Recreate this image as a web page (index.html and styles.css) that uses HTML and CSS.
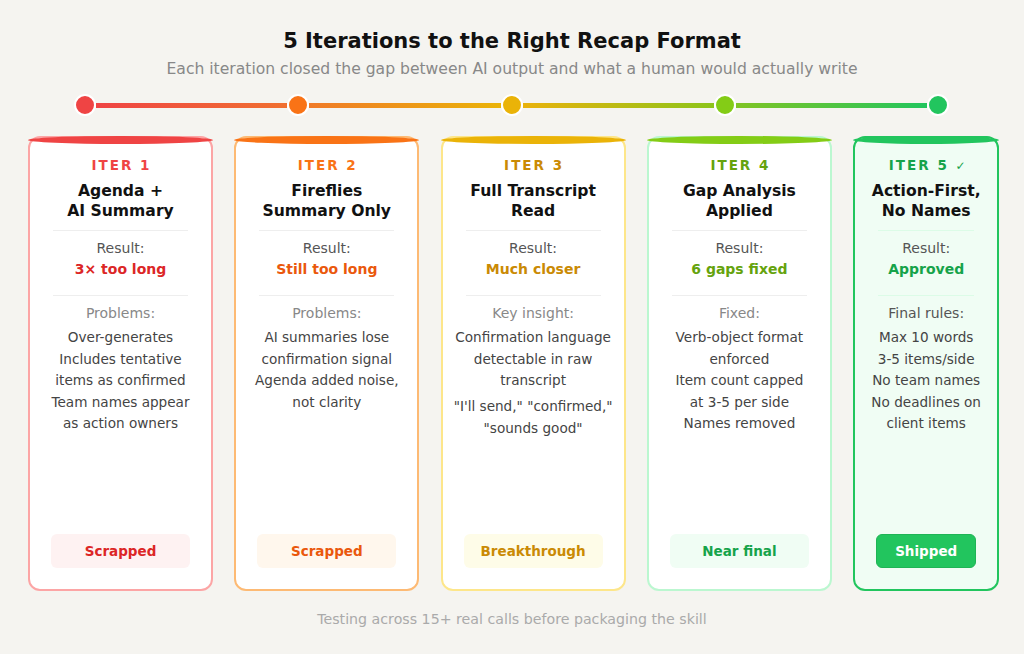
FILE: index.html
```html
<!DOCTYPE html>
<html lang="en">
<head>
<meta charset="utf-8">
<title>5 Iterations to the Right Recap Format</title>
<link rel="stylesheet" href="styles.css">
</head>
<body>
<main class="page">
  <h1 class="title">5 Iterations to the Right Recap Format</h1>
  <p class="subtitle">Each iteration closed the gap between AI output and what a human would actually write</p>

  <div class="timeline">
    <span class="dot d1"></span><span class="seg s1"></span>
    <span class="dot d2"></span><span class="seg s2"></span>
    <span class="dot d3"></span><span class="seg s3"></span>
    <span class="dot d4"></span><span class="seg s4"></span>
    <span class="dot d5"></span>
  </div>

  <div class="cards">
    <section class="card c1">
      <div class="bar"></div>
      <div class="iter">ITER 1</div>
      <div class="name">Agenda +<br>AI Summary</div>
      <div class="rule"></div>
      <div class="label">Result:</div>
      <div class="value">3× too long</div>
      <div class="rule rule2"></div>
      <div class="label light">Problems:</div>
      <div class="lines">
        <div>Over-generates</div>
        <div>Includes tentative</div>
        <div>items as confirmed</div>
        <div>Team names appear</div>
        <div>as action owners</div>
      </div>
      <div class="badge">Scrapped</div>
    </section>

    <section class="card c2">
      <div class="bar"></div>
      <div class="iter">ITER 2</div>
      <div class="name">Fireflies<br>Summary Only</div>
      <div class="rule"></div>
      <div class="label">Result:</div>
      <div class="value">Still too long</div>
      <div class="rule rule2"></div>
      <div class="label light">Problems:</div>
      <div class="lines">
        <div>AI summaries lose</div>
        <div>confirmation signal</div>
        <div>Agenda added noise,</div>
        <div>not clarity</div>
      </div>
      <div class="badge">Scrapped</div>
    </section>

    <section class="card c3">
      <div class="bar"></div>
      <div class="iter">ITER 3</div>
      <div class="name">Full Transcript<br>Read</div>
      <div class="rule"></div>
      <div class="label">Result:</div>
      <div class="value">Much closer</div>
      <div class="rule rule2"></div>
      <div class="label light">Key insight:</div>
      <div class="lines">
        <div>Confirmation language</div>
        <div>detectable in raw</div>
        <div>transcript</div>
        <div class="gap">"I'll send," "confirmed,"</div>
        <div>"sounds good"</div>
      </div>
      <div class="badge">Breakthrough</div>
    </section>

    <section class="card c4">
      <div class="bar"></div>
      <div class="iter">ITER 4</div>
      <div class="name">Gap Analysis<br>Applied</div>
      <div class="rule"></div>
      <div class="label">Result:</div>
      <div class="value">6 gaps fixed</div>
      <div class="rule rule2"></div>
      <div class="label light">Fixed:</div>
      <div class="lines">
        <div>Verb-object format</div>
        <div>enforced</div>
        <div>Item count capped</div>
        <div>at 3-5 per side</div>
        <div>Names removed</div>
      </div>
      <div class="badge">Near final</div>
    </section>

    <section class="card c5">
      <div class="bar"></div>
      <div class="iter">ITER 5 <span class="check">✓</span></div>
      <div class="name">Action-First,<br>No Names</div>
      <div class="rule"></div>
      <div class="label">Result:</div>
      <div class="value">Approved</div>
      <div class="rule rule2"></div>
      <div class="label">Final rules:</div>
      <div class="lines">
        <div>Max 10 words</div>
        <div>3-5 items/side</div>
        <div>No team names</div>
        <div>No deadlines on</div>
        <div>client items</div>
      </div>
      <div class="badge">Shipped</div>
    </section>
  </div>

  <p class="footer">Testing across 15+ real calls before packaging the skill</p>
</main>
</body>
</html>
```

FILE: styles.css
```css
html, body {
  margin: 0;
  padding: 0;
  background: #f5f4f0;
}

body {
  font-family: "DejaVu Sans", Verdana, sans-serif;
  width: 1024px;
  height: 654px;
  overflow: hidden;
}

.page {
  display: flex;
  flex-direction: column;
  align-items: stretch;
}

.title {
  margin: 28px 0 0;
  height: 26px;
  line-height: 26px;
  font-size: 21px;
  font-weight: bold;
  text-align: center;
  color: #111111;
}

.subtitle {
  margin: 6px 0 0;
  height: 18px;
  line-height: 18px;
  font-size: 15.6px;
  text-align: center;
  color: #888888;
}

/* timeline */
.timeline {
  display: flex;
  align-items: center;
  margin: 16px 0 0 74px;
  width: 875px;
  height: 22px;
}

.dot {
  flex: none;
  width: 18px;
  height: 18px;
  border: 2px solid #ffffff;
  border-radius: 50%;
}

.seg {
  flex: 1;
  height: 5px;
}

.d1 { background: #ef4444; }
.d2 { background: #f97316; }
.d3 { background: #eab308; }
.d4 { background: #84cc16; }
.d5 { background: #22c55e; }

.s1 { background: linear-gradient(to right, #ef4444, #f07030); }
.s2 { background: linear-gradient(to right, #f07a28, #eab308); }
.s3 { background: linear-gradient(to right, #e9b20c, #8cc41a); }
.s4 { background: linear-gradient(to right, #80c424, #22c55e); }

/* cards */
.cards {
  display: flex;
  gap: 21.3px;
  margin: 20px 0 0 28px;
}

.card {
  box-sizing: border-box;
  width: 185px;
  height: 455px;
  display: flex;
  flex-direction: column;
  align-items: stretch;
  text-align: center;
  background: #ffffff;
  border: 2px solid #cccccc;
  border-radius: 12px;
}

.bar {
  height: 8px;
  margin: -2px -2px 0;
  border-radius: 50% / 4px;
}

.iter {
  margin-top: 13px;
  height: 16px;
  line-height: 16px;
  font-size: 13.5px;
  font-weight: bold;
  letter-spacing: 2px;
  padding-left: 2px;
}

.check {
  font-weight: normal;
  font-size: 12px;
  letter-spacing: 0;
}

.name {
  margin-top: 8px;
  line-height: 20px;
  font-size: 15.6px;
  font-weight: bold;
  color: #111111;
}

.rule {
  margin: 9px 23px 0;
  height: 1px;
  background: #eeeeee;
}

.rule2 {
  margin-top: 17px;
}

.label {
  margin-top: 8px;
  height: 18px;
  line-height: 18px;
  font-size: 14px;
  color: #555555;
}

.label.light {
  color: #888888;
}

.value {
  margin-top: 3px;
  height: 18px;
  line-height: 18px;
  font-size: 14px;
  font-weight: bold;
}

.lines {
  margin-top: 5.25px;
  font-size: 13.6px;
  line-height: 21.5px;
  color: #444444;
  white-space: nowrap;
}

.lines .gap {
  margin-top: 4.5px;
}

.badge {
  margin: auto 21px 21px;
  height: 34px;
  line-height: 34px;
  border-radius: 6px;
  font-size: 13.5px;
  font-weight: bold;
}

.c1 { border-color: #fca5a5; }
.c1 .bar { background: #ef4444; }
.c1 .iter { color: #ef4444; }
.c1 .value { color: #dc2626; }
.c1 .badge { background: #fef2f2; color: #dc2626; }

.c2 { border-color: #fdba74; }
.c2 .bar { background: #f97316; }
.c2 .iter { color: #f97316; }
.c2 .value { color: #ea580c; }
.c2 .badge { background: #fff7ed; color: #ea580c; }

.c3 { border-color: #fde68a; }
.c3 .bar { background: #eab308; }
.c3 .iter { color: #ca8a04; }
.c3 .value { color: #ca8a04; }
.c3 .badge { background: #fefce8; color: #ca8a04; }

.c4 { border-color: #bbf7d0; }
.c4 .bar { background: #84cc16; }
.c4 .iter { color: #65a30d; }
.c4 .value { color: #65a30d; }
.c4 .badge { background: #f0fdf4; color: #16a34a; }

.c5 {
  width: 146px;
  border-color: #22c55e;
  background: #f0fdf4;
}
.c5 .bar { background: #22c55e; }
.c5 .iter { color: #16a34a; }
.c5 .value { color: #16a34a; }
.c5 .rule { background: #dcfce7; }
.c5 .label { color: #555555; }
.c5 .lines { margin-left: -12px; margin-right: -12px; }
.c5 .badge {
  box-sizing: border-box;
  background: #22c55e;
  border: 1px solid #1fb455;
  color: #ffffff;
  line-height: 32px;
}

.footer {
  margin: 19px 0 0;
  height: 18px;
  line-height: 18px;
  font-size: 14.2px;
  text-align: center;
  color: #aaaaaa;
}
```
